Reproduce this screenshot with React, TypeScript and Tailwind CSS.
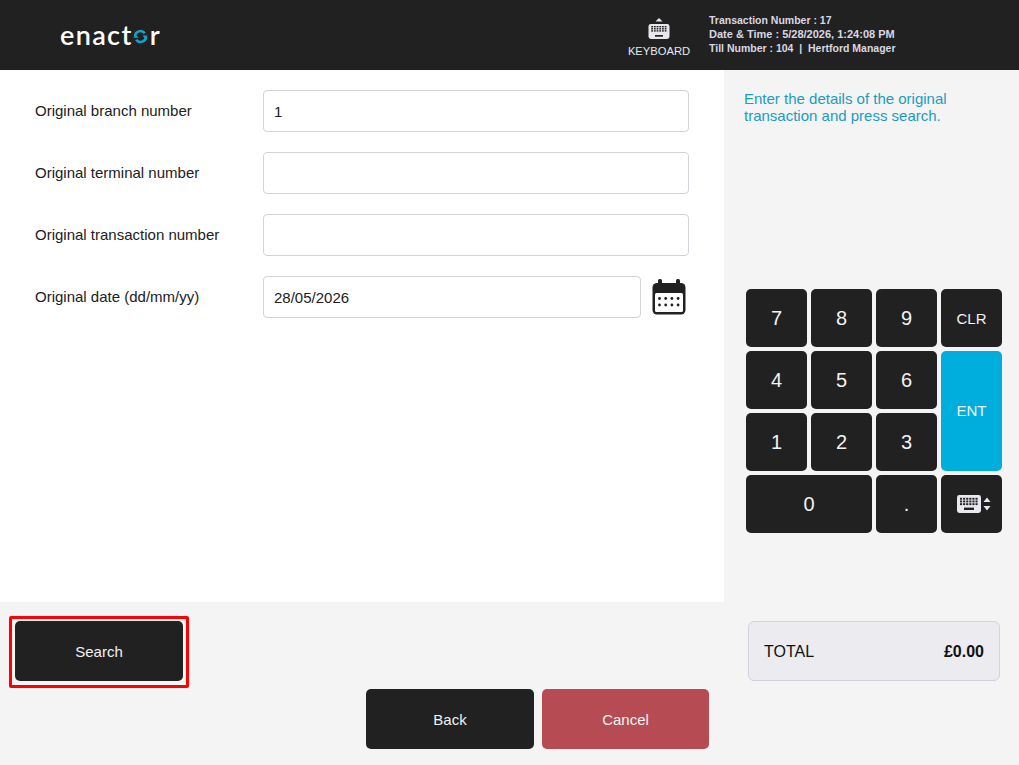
import React from "react";

const font = { fontFamily: '"Liberation Sans", Arial, sans-serif' };

function Logo() {
  return (
    <div className="flex items-center text-white text-[27px] leading-none tracking-[1.35px] font-semibold" style={{ fontFamily: 'Lato, "Noto Sans", sans-serif' }}>
      <span>enact</span>
      <svg viewBox="0 0 16 16" className="w-[15px] h-[15px] mt-[4px] mr-[2px]">
        <path d="M2.2 8 A5.8 5.8 0 0 1 12.6 4.5" fill="none" stroke="#12a3cf" strokeWidth="2.8" />
        <path d="M13.8 8 A5.8 5.8 0 0 1 3.4 11.5" fill="none" stroke="#12a3cf" strokeWidth="2.8" />
        <path d="M10 6.8 L15.6 6.8 L13.2 10 Z" fill="#12a3cf" />
        <path d="M6 9.2 L0.4 9.2 L2.8 6 Z" fill="#12a3cf" />
      </svg>
      <span>r</span>
    </div>
  );
}

function KeyboardGlyph({ className, fill = "#e8e8ee", cut = "#212121" }: { className?: string; fill?: string; cut?: string }) {
  const keys: React.ReactNode[] = [];
  for (let r = 0; r < 3; r++) {
    for (let c = 0; c < 6; c++) {
      keys.push(<rect key={`${r}-${c}`} x={3 + c * 3.1} y={2.8 + r * 2.7} width="2.1" height="1.9" fill={cut} />);
    }
  }
  return (
    <svg viewBox="0 0 24 18" className={className}>
      <rect x="0" y="0" width="24" height="18" rx="2.4" fill={fill} />
      {keys}
      <rect x="7" y="12.6" width="10" height="2.4" fill={cut} />
    </svg>
  );
}

function Field({ label, value, narrow }: { label: string; value?: string; narrow?: boolean }) {
  return (
    <div className="flex items-center h-[42px]">
      <label className="w-[263px] shrink-0 pl-[35px] pt-[1px] text-[15px] text-[#212121]">{label}</label>
      <div className="flex items-center">
        <input
          readOnly
          value={value ?? ""}
          className={`${narrow ? "w-[378px]" : "w-[426px]"} h-[42px] px-[10px] pt-[1px] bg-white border border-[#d2d2d8] rounded-[4px] text-[15px] text-[#212121] outline-none`}
          style={font}
        />
        {narrow && (
          <svg viewBox="0 0 34 36" className="w-[34px] h-[36px] ml-[11px] mt-[-1px]">
            <rect x="6" y="0" width="4" height="8" rx="1.5" fill="#212121" />
            <rect x="24" y="0" width="4" height="8" rx="1.5" fill="#212121" />
            <rect x="0.5" y="4" width="33" height="31.5" rx="4.5" fill="#212121" />
            <rect x="3" y="14" width="28" height="19" rx="1.5" fill="#ffffff" />
            {[0, 1, 2, 3].map((c) =>
              [0, 1].map((r) => <circle key={`${c}${r}`} cx={7.5 + c * 6.2} cy={19.5 + r * 6.5} r="1.4" fill="#212121" />)
            )}
          </svg>
        )}
      </div>
    </div>
  );
}

function Key({ children, className = "", sm }: { children: React.ReactNode; className?: string; sm?: boolean }) {
  return (
    <button className={`flex items-center justify-center rounded-[5px] bg-[#212121] text-[#f2f2f2] ${sm ? "text-[15px]" : "text-[20px]"} ${className}`}>
      {children}
    </button>
  );
}

function ActionButton({ children, className = "" }: { children: React.ReactNode; className?: string }) {
  return (
    <button className={`w-[168px] h-[60px] pt-[2px] flex items-center justify-center rounded-[5px] text-[15px] text-[#f2f2f2] ${className}`}>
      {children}
    </button>
  );
}

export default function App() {
  return (
    <div className="w-full h-[765px] flex flex-col bg-[#f4f4f5] overflow-hidden" style={font}>
      <header className="h-[70px] shrink-0 bg-[#212121] flex items-center">
        <div className="pl-[60px] pb-[1px] w-[626px]">
          <Logo />
        </div>
        <div className="w-[66px] flex flex-col items-center pt-[5.5px]">
          <svg viewBox="0 0 22 22" className="w-[22px] h-[22px] shrink-0">
            <path d="M11 0 L14.5 3.4 L7.5 3.4 Z" fill="#e8e8ee" />
            <rect x="0.5" y="6" width="21" height="15" rx="2.4" fill="#e8e8ee" />
            {[0, 1, 2].map((r) =>
              [0, 1, 2, 3, 4, 5].map((c) => <rect key={`${r}${c}`} x={3.2 + c * 2.7} y={8 + r * 2.1} width="1.8" height="1.4" fill="#212121" />)
            )}
            <rect x="7" y="17" width="8" height="1.7" fill="#212121" />
          </svg>
          <span className="text-[11.2px] leading-[13px] mt-[4.5px] text-[#e8e8f0] whitespace-nowrap">KEYBOARD</span>
        </div>
        <div className="ml-[17px] text-[10.5px] leading-[14px] font-bold text-[#d8d8e4] pb-[3px] whitespace-pre">
          <div>Transaction Number : 17</div>
          <div className="text-[11px]">Date &amp; Time : 5/28/2026, 1:24:08 PM</div>
          <div>Till Number : 104  |  Hertford Manager</div>
        </div>
      </header>

      <main className="h-[532px] shrink-0 flex">
        <section className="w-[724px] bg-white pt-[20px] flex flex-col gap-[20px]">
          <Field label="Original branch number" value="1" />
          <Field label="Original terminal number" />
          <Field label="Original transaction number" />
          <Field label="Original date (dd/mm/yy)" value="28/05/2026" narrow />
        </section>
        <aside className="flex-1 flex flex-col">
          <p className="pl-[20px] pr-[40px] pt-[20px] text-[15px] leading-[17px] text-[#1a9cc4]">
            Enter the details of the original transaction and press search.
          </p>
          <div className="ml-[22px] mt-[165px] grid grid-cols-[repeat(4,61px)] grid-rows-[repeat(4,58px)] gap-[4px]">
            <Key>7</Key>
            <Key>8</Key>
            <Key>9</Key>
            <Key sm className="pt-[2px]">CLR</Key>
            <Key>4</Key>
            <Key>5</Key>
            <Key>6</Key>
            <Key sm className="row-span-2 !bg-[#00aedd]">ENT</Key>
            <Key>1</Key>
            <Key>2</Key>
            <Key>3</Key>
            <Key className="col-span-2">0</Key>
            <Key>.</Key>
            <Key>
              <span className="flex items-center gap-[2px] ml-[5px]">
                <KeyboardGlyph className="w-[24px] h-[18px]" />
                <svg viewBox="0 0 8 14" className="w-[8px] h-[14px]">
                  <path d="M4 0.5 L7.5 5 L0.5 5 Z M4 13.5 L7.5 9 L0.5 9 Z" fill="#e8e8ee" />
                </svg>
              </span>
            </Key>
          </div>
        </aside>
      </main>

      <footer className="flex-1 flex">
        <div className="w-[724px] flex flex-col">
          <div className="ml-[9px] mt-[14px] w-[180px] h-[72px] pb-[2px] border-[3px] border-[#ff0000] rounded-[2px] flex items-center justify-center">
            <ActionButton className="bg-[#212121]">Search</ActionButton>
          </div>
          <div className="ml-[366px] mt-px flex gap-[8px]">
            <ActionButton className="bg-[#212121]">Back</ActionButton>
            <ActionButton className="bg-[#b64b54] !w-[167px]">Cancel</ActionButton>
          </div>
        </div>
        <div className="ml-[24px] mt-[19px] w-[252px] h-[60px] px-[15px] pt-[1px] flex items-center justify-between bg-[#ebebf0] border border-[#d2d2de] rounded-[6px] text-[16px] text-[#111111]">
          <span>TOTAL</span>
          <span className="font-bold">£0.00</span>
        </div>
      </footer>
    </div>
  );
}
